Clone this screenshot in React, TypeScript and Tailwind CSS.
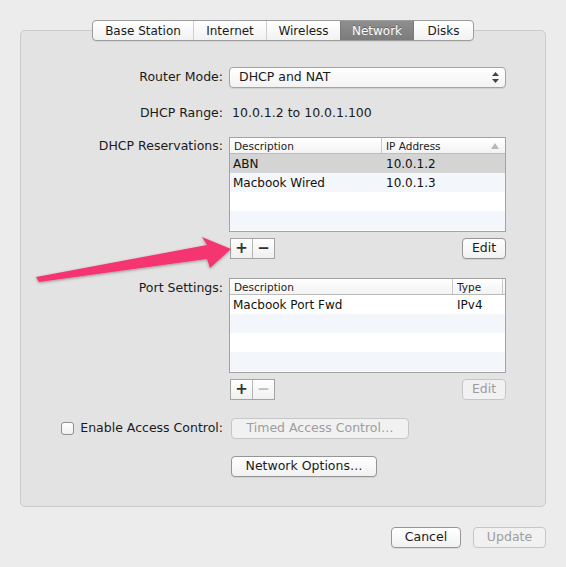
import React from "react";

const Btn = ({
  children,
  w,
  disabled,
  h = "h-[21px]",
}: {
  children: React.ReactNode;
  w: string;
  disabled?: boolean;
  h?: string;
}) => (
  <div
    className={`${w} ${h} flex items-center justify-center rounded-[4px] border text-[12.5px] leading-none ${
      disabled
        ? "border-[#c6c6c6] bg-[#f1f1f1] text-[#9d9d9d]"
        : "border-[#959595] bg-gradient-to-b from-[#ffffff] to-[#f1f1f1] text-[#1a1a1a] shadow-[0_1px_0_rgba(0,0,0,0.08)]"
    }`}
  >
    {children}
  </div>
);

const PlusMinus = ({ minusDisabled }: { minusDisabled?: boolean }) => (
  <div className="flex h-[21px] w-[45px] border border-[#a3a3a3] bg-gradient-to-b from-[#ffffff] to-[#f0f0f0] ml-[1px]">
    <div className="flex w-[22px] items-center justify-center border-r border-[#b4b4b4] text-[15px] font-bold leading-none text-[#333]">
      +
    </div>
    <div
      className={`flex flex-1 items-center justify-center text-[15px] font-bold leading-none ${
        minusDisabled ? "text-[#bdbdbd]" : "text-[#333]"
      }`}
    >
      −
    </div>
  </div>
);

type Col = { title: string; width: string; pad: string; sort?: boolean };

const Table = ({
  cols,
  rows,
  selected,
  trailing,
}: {
  cols: Col[];
  rows: string[][];
  selected?: number;
  trailing?: boolean;
}) => {
  const all = [0, 1, 2, 3];
  return (
    <div className="w-[277px] h-[95px] border border-[#a2a2a2] bg-white flex flex-col">
      <div className="flex h-[16px] border-b border-[#bcbcbc] bg-gradient-to-b from-[#ffffff] to-[#f3f3f3] text-[10.5px] leading-[16px] text-[#222]">
        {cols.map((c, i) => (
          <div
            key={c.title}
            className={`${c.width} ${c.pad} relative ${
              i < cols.length - 1 || trailing ? "border-r border-[#c9c9c9]" : ""
            } ${i === cols.length - 1 && !trailing ? "flex-1" : ""}`}
          >
            {c.title}
            {c.sort && (
              <svg
                className="absolute right-[6px] top-[5px]"
                width="8"
                height="6"
                viewBox="0 0 8 6"
              >
                <polygon points="4,0 8,6 0,6" fill="#b9b9b9" />
              </svg>
            )}
          </div>
        ))}
      </div>
      {all.map((r) => {
        const row = rows[r];
        const bg =
          selected === r
            ? "bg-[#d4d4d4]"
            : r % 2 === 1
            ? "bg-[#f3f6fa]"
            : "bg-white";
        return (
          <div key={r} className={`flex h-[19px] items-center ${bg} text-[12px] text-[#111]`}>
            {row &&
              row.map((cell, i) => (
                <div
                  key={i}
                  className={`${cols[i].width} ${i === 0 ? "pl-[3px]" : "pl-[4px]"} ${
                    i < cols.length - 1 ? "pr-[1px]" : ""
                  }`}
                >
                  {cell}
                </div>
              ))}
          </div>
        );
      })}
    </div>
  );
};

const Label = ({ children, cls = "" }: { children: React.ReactNode; cls?: string }) => (
  <div className={`w-[202px] text-right pr-0 text-[12.5px] text-[#1a1a1a] ${cls}`}>{children}</div>
);

export default function App() {
  const tabs = [
    { t: "Base Station", w: "w-[100px]" },
    { t: "Internet", w: "w-[73px]" },
    { t: "Wireless", w: "w-[74px]" },
    { t: "Network", w: "w-[74px]", sel: true },
    { t: "Disks", w: "w-[59px]" },
  ];
  return (
    <div className="relative w-[566px] h-[567px] overflow-hidden bg-[#ececec] px-[20px] pt-[20px] font-['DejaVu_Sans',sans-serif] text-[#1a1a1a]">
      {/* tabs */}
      <div className="relative z-10 flex justify-center">
        <div className="flex h-[21px] rounded-[4px] border border-[#9c9c9c] bg-gradient-to-b from-[#ffffff] to-[#f2f2f2] overflow-hidden shadow-[0_1px_0_rgba(0,0,0,0.06)]">
          {tabs.map((tab, i) => (
            <div
              key={tab.t}
              className={`${tab.w} flex items-center justify-center text-[12px] leading-none ${
                tab.sel
                  ? "bg-gradient-to-b from-[#8f8f8f] to-[#7b7b7b] text-white [text-shadow:0_-1px_0_rgba(0,0,0,0.3)]"
                  : "text-[#1a1a1a]"
              } ${
                i > 0 && !tab.sel && !tabs[i - 1].sel ? "border-l border-[#cfcfcf]" : ""
              } ${tab.sel ? "border-x border-[#7a7a7a]" : ""}`}
            >
              {tab.t}
            </div>
          ))}
        </div>
      </div>

      {/* group box */}
      <div className="mt-[-11px] h-[477px] rounded-[5px] border border-[#cbcbcb] bg-[#e3e3e3] pt-[36px]">
        {/* Router mode */}
        <div className="flex h-[21px] items-center">
          <Label>Router Mode:</Label>
          <div className="ml-[6px] flex h-[21px] w-[277px] items-center justify-between rounded-[4px] border border-[#a3a3a3] bg-gradient-to-b from-[#ffffff] to-[#f3f3f3] pl-[9px] pr-[6px] text-[12.5px] shadow-[0_1px_0_rgba(0,0,0,0.08)]">
            <span>DHCP and NAT</span>
            <svg width="7" height="11" viewBox="0 0 7 11">
              <polygon points="3.5,0 7,4 0,4" fill="#444" />
              <polygon points="0,7 7,7 3.5,11" fill="#444" />
            </svg>
          </div>
        </div>

        {/* DHCP range */}
        <div className="mt-[15px] flex h-[20px] items-center">
          <Label>DHCP Range:</Label>
          <div className="ml-[9px] text-[12.5px]">10.0.1.2 to 10.0.1.100</div>
        </div>

        {/* DHCP reservations */}
        <div className="mt-[14px] flex items-start">
          <Label cls="leading-[18px]">DHCP Reservations:</Label>
          <div className="ml-[6px]">
            <Table
              cols={[
                { title: "Description", width: "w-[152px]", pad: "pl-[4px]" },
                { title: "IP Address", width: "w-[123px]", pad: "pl-[4px]", sort: true },
              ]}
              rows={[
                ["ABN", "10.0.1.2"],
                ["Macbook Wired", "10.0.1.3"],
              ]}
              selected={0}
            />
          </div>
        </div>
        <div className="mt-[6px] flex h-[21px] items-center">
          <div className="w-[208px]" />
          <div className="flex w-[277px] items-center justify-between">
            <PlusMinus />
            <Btn w="w-[44px]">Edit</Btn>
          </div>
        </div>

        {/* Port settings */}
        <div className="mt-[19px] flex items-start">
          <Label cls="leading-[18px] pt-[1px]">Port Settings:</Label>
          <div className="ml-[6px]">
            <Table
              cols={[
                { title: "Description", width: "w-[223px]", pad: "pl-[4px]" },
                { title: "Type", width: "w-[50px]", pad: "pl-[4px]" },
              ]}
              rows={[["Macbook Port Fwd", "IPv4"]]}
              trailing
            />
          </div>
        </div>
        <div className="mt-[6px] flex h-[21px] items-center">
          <div className="w-[208px]" />
          <div className="flex w-[277px] items-center justify-between">
            <PlusMinus minusDisabled />
            <Btn w="w-[44px]" disabled>
              Edit
            </Btn>
          </div>
        </div>

        {/* Access control */}
        <div className="mt-[18px] flex h-[21px] items-center">
          <div className="flex w-[202px] items-center justify-end gap-[6px] text-[12.5px]">
            <div className="h-[13px] w-[13px] rounded-[3px] border border-[#8f8f8f] bg-gradient-to-b from-[#ffffff] to-[#efefef]" />
            <span>Enable Access Control:</span>
          </div>
          <div className="ml-[8px]">
            <Btn w="w-[178px]" disabled>
              Timed Access Control…
            </Btn>
          </div>
        </div>

        <div className="mt-[17px] flex h-[21px] items-center">
          <div className="w-[210px]" />
          <Btn w="w-[146px]">Network Options…</Btn>
        </div>
      </div>

      {/* bottom buttons */}
      <div className="mt-[20px] flex justify-end gap-[12px]">
        <Btn w="w-[70px]">Cancel</Btn>
        <Btn w="w-[73px]" disabled>
          Update
        </Btn>
      </div>

      {/* annotation arrow */}
      <svg
        className="pointer-events-none absolute left-0 top-0"
        width="566"
        height="567"
        viewBox="0 0 566 567"
      >
        <defs>
          <filter id="sh" x="-10%" y="-30%" width="120%" height="160%">
            <feDropShadow dx="0" dy="1" stdDeviation="1.5" floodColor="#000" floodOpacity="0.35" />
          </filter>
        </defs>
        <polygon
          points="36,277 207,245 202,237 231,249 210,268 207,259 39,282"
          fill="#f43670"
          filter="url(#sh)"
          strokeLinejoin="round"
        />
      </svg>
    </div>
  );
}
